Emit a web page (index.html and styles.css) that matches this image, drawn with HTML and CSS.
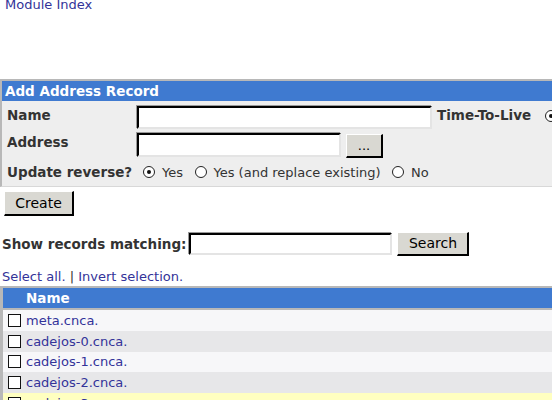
FILE: index.html
```html
<!DOCTYPE html>
<html>
<head>
<meta charset="utf-8">
<link rel="stylesheet" href="styles.css">
</head>
<body>
<div class="page">
  <div class="topbar"><a class="link" href="#">Module Index</a></div>

  <div class="form">
    <div class="fhead">Add Address Record</div>
    <div class="fbody">
      <div class="lbl">Name</div>
      <div class="cell"><input class="txt name" type="text"></div>
      <div class="lbl ttl">Time-To-Live</div>
      <div class="cell"><span class="radio on ttlr"></span></div>

      <div class="lbl">Address</div>
      <div class="cell addr"><input class="txt address" type="text"><button class="btn dots">...</button></div>
      <div></div><div></div>

      <div class="lbl upd">Update reverse?</div>
      <div class="cell radios">
        <span class="radio on"></span><span class="rl">Yes</span>
        <span class="radio"></span><span class="rl">Yes (and replace existing)</span>
        <span class="radio"></span><span class="rl">No</span>
      </div>
    </div>
  </div>

  <div class="createrow"><button class="btn create">Create</button></div>

  <div class="searchrow">
    <span class="slbl">Show records matching:</span>
    <input class="txt search" type="text">
    <button class="btn sbtn">Search</button>
  </div>

  <div class="sel"><a class="link" href="#">Select all.</a> | <a class="link" href="#">Invert selection.</a></div>

  <div class="list">
    <div class="lhead"><span class="hname">Name</span></div>
    <div class="row odd"><span class="cb"></span><a class="link" href="#">meta.cnca.</a></div>
    <div class="row even"><span class="cb"></span><a class="link" href="#">cadejos-0.cnca.</a></div>
    <div class="row odd"><span class="cb"></span><a class="link" href="#">cadejos-1.cnca.</a></div>
    <div class="row even"><span class="cb"></span><a class="link" href="#">cadejos-2.cnca.</a></div>
    <div class="row hl"><span class="cb"></span><a class="link" href="#">cadejos-3.cnca.</a></div>
  </div>
</div>
</body>
</html>
```

FILE: styles.css
```css
html, body {
  margin: 0;
  padding: 0;
  background: #ffffff;
  overflow: hidden;
}
body {
  font-family: "DejaVu Sans", Verdana, sans-serif;
  font-size: 13px;
  color: #333333;
}
.page {
  width: 800px;
}
.link {
  color: #333399;
  text-decoration: none;
}
.topbar {
  height: 81px;
  padding-left: 5px;
  line-height: 13px;
  margin-top: -2px;
}
.topbar .link { display: block; }

.form {
  border: 2px solid #b8b8b8;
  border-bottom: 1px solid #d8d8d8;
}
.fhead {
  background: #3f7ad0;
  color: #ffffff;
  font-weight: bold;
  font-size: 13.5px;
  height: 20px;
  line-height: 21px;
  padding-left: 3px;
}
.fbody {
  background: #eeeeee;
  display: grid;
  grid-template-columns: 130px 300px 108px auto;
  grid-template-rows: 23px 24px 20px;
  row-gap: 4px;
  padding: 5px 0 5px 5px;
}
.lbl {
  font-weight: bold;
  font-size: 13.5px;
  color: #333333;
  padding-top: 1px;
}
.upd { padding-top: 3px; }
.cell { display: flex; align-items: flex-start; }
.addr { gap: 5px; }
.radios {
  grid-column: 2 / 5;
  align-items: center;
  padding-top: 2px;
}
.txt {
  box-sizing: border-box;
  background: #ffffff;
  border-style: solid;
  border-width: 2px;
  border-color: #000000 #e4e4e4 #e4e4e4 #000000;
  box-shadow: -1px -1px 0 #999999;
  margin: 0;
  padding: 0 2px;
  font: inherit;
}
.name { width: 295px; height: 23px; }
.address { width: 204px; height: 24px; }
.btn {
  box-sizing: border-box;
  background: #d9d8d2;
  border-style: solid;
  border-width: 1px 2px 2px 1px;
  border-color: #ffffff #000000 #000000 #ffffff;
  font-family: "DejaVu Sans", Verdana, sans-serif;
  font-size: 14px;
  color: #000000;
  padding: 0;
  margin: 0;
}
.dots { width: 37px; height: 24px; margin-top: 1px; font-size: 13px; }
.radio {
  box-sizing: border-box;
  display: inline-block;
  width: 12px;
  height: 12px;
  border: 1.5px solid #222222;
  border-radius: 50%;
  background: #ffffff;
  position: relative;
  margin: 0 7px 0 11px;
  flex: none;
}
.radio.on::after {
  content: "";
  position: absolute;
  left: 2.5px;
  top: 2.5px;
  width: 4px;
  height: 4px;
  border-radius: 50%;
  background: #111111;
}
.radios .radio:first-child { margin-left: 6px; }
.rl + .radio { margin-left: 11.5px; }
.ttlr { margin: 4px 0 0 0; }

.createrow { padding: 4px 0 0 4px; height: 40px; }
.create { width: 70px; height: 25px; }

.searchrow {
  display: flex;
  align-items: center;
  padding-left: 2px;
  height: 24px;
  margin-top: 1px;
}
.slbl { font-weight: bold; font-size: 13.5px; margin-right: 3px; }
.search { width: 203px; height: 22px; }
.sbtn { width: 72px; height: 24px; margin-left: 5px; margin-top: -1px; }

.sel {
  padding: 13px 0 0 2px;
  height: 17px;
  line-height: 16px;
}

.list {
  border-left: 3px solid #b8b8b8;
}
.lhead {
  background: #3f7ad0;
  border-top: 2px solid #b8b8b8;
  border-bottom: 2px solid #b8b8b8;
  height: 20px;
  line-height: 20px;
  color: #ffffff;
  font-weight: bold;
  font-size: 13.5px;
}
.hname { padding-left: 23px; }
.row {
  height: 20.8px;
  display: flex;
  align-items: center;
}
.odd { background: #f7f7f9; }
.even { background: #e7e7e9; }
.hl { background: #ffffc0; }
.cb {
  box-sizing: border-box;
  width: 13px;
  height: 13px;
  border: 1px solid #111111;
  background: #ffffff;
  margin: 0 5px 0 5px;
  flex: none;
}
```
